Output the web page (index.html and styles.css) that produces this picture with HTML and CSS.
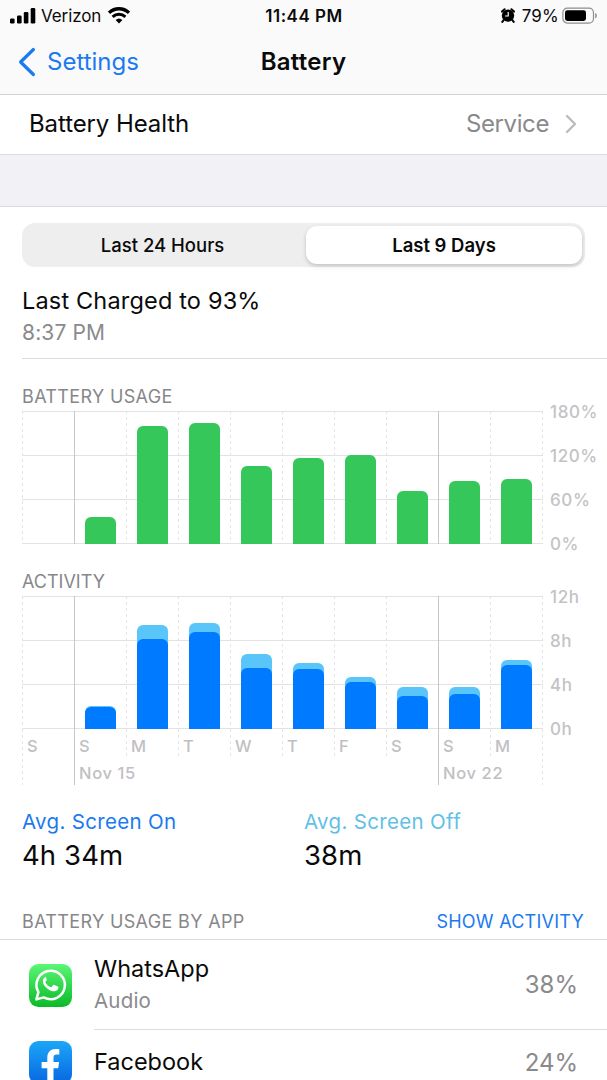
FILE: index.html
```html
<!DOCTYPE html>
<html lang="en">
<head>
    <meta charset="UTF-8">
    <meta name="viewport" content="width=device-width, initial-scale=1.0">
    <title>Battery</title>
    <link rel="stylesheet" href="styles.css">
</head>
<body>
    <header class="header">
        <div class="status-bar">
            <div class="status-left">
                <svg class="signal" width="26" height="16" viewBox="0 0 26 16">
                    <rect x="0" y="10.5" width="4.6" height="5" rx="1.3"/>
                    <rect x="7" y="7.5" width="4.6" height="8" rx="1.3"/>
                    <rect x="13.8" y="4" width="4.6" height="11.5" rx="1.3"/>
                    <rect x="20.7" y="0" width="4.6" height="15.5" rx="1.3"/>
                </svg>
                <span class="carrier">Verizon</span>
                <svg class="wifi" width="22" height="17" viewBox="0 0 22 17">
                    <path d="M1 5.700a14.600 14.600 0 0 1 20 0" fill="none" stroke="#000" stroke-width="3.300"/>
                    <path d="M4.600 9.800a9.400 9.400 0 0 1 12.800 0" fill="none" stroke="#000" stroke-width="3"/>
                    <path d="M11 16.400l-3.400-3.300a5 5 0 0 1 6.800 0z"/>
                </svg>
            </div>
            <div class="time">11:44 PM</div>
            <div class="status-right">
                <svg class="alarm" width="14" height="15" viewBox="0 0 14 15">
                    <circle cx="7" cy="7.600" r="6.200"/>
                    <path d="M1 3.600L3.600 1.200M13 3.600L10.400 1.200M2.600 12.200l-1.300 1.700M11.400 12.200l1.300 1.700" stroke="#000" stroke-width="2" stroke-linecap="round"/>
                    <path d="M7.200 4v4H4" fill="none" stroke="#fafafb" stroke-width="1.200"/>
                </svg>
                <span class="percent">79%</span>
                <svg class="battery" width="36" height="18" viewBox="0 0 36 18">
                    <rect x=".9" y="1.100" width="30.600" height="15" rx="4.500" fill="none" stroke="#8e8e90" stroke-width="1.200"/>
                    <rect x="3" y="3.200" width="21" height="10.800" rx="2.400"/>
                    <path d="M33.200 6v5.400c2.200-.6 2.200-4.800 0-5.400z" fill="#8e8e90"/>
                </svg>
            </div>
        </div>
        <div class="nav">
            <a class="back">
                <svg width="18" height="30" viewBox="0 0 18 30">
                    <path d="M15.400 2.500L2.600 15l12.800 12.500" fill="none" stroke="#1a7af0" stroke-width="3.200" stroke-linecap="round" stroke-linejoin="round"/>
                </svg>
                <span class="back-label">Settings</span>
            </a>
            <h1>Battery</h1>
        </div>
    </header>

    <div class="health">
        <span class="health-label">Battery Health</span>
        <span class="health-value">Service</span>
        <svg width="12" height="20" viewBox="0 0 12 20">
            <path d="M2 2l8 8-8 8" fill="none" stroke="#bcbcbf" stroke-width="2.400" stroke-linecap="round" stroke-linejoin="round"/>
        </svg>
    </div>
    <div class="gap"></div>

    <div class="segmented">
        <div class="segment">Last 24 Hours</div>
        <div class="segment active">Last 9 Days</div>
    </div>

    <div class="charged">
        <div class="charged-title">Last Charged to 93%</div>
        <div class="charged-time">8:37 PM</div>
    </div>

    <section class="usage">
        <h2>BATTERY USAGE</h2>
        <div class="chart">
            <div class="plot">
                <div class="col"></div>
                <div class="col week"><div class="bar" style="height: 27px"></div></div>
                <div class="col"><div class="bar" style="height: 118px"></div></div>
                <div class="col"><div class="bar" style="height: 121px"></div></div>
                <div class="col"><div class="bar" style="height: 78px"></div></div>
                <div class="col"><div class="bar" style="height: 86px"></div></div>
                <div class="col"><div class="bar" style="height: 89px"></div></div>
                <div class="col"><div class="bar" style="height: 53px"></div></div>
                <div class="col week"><div class="bar" style="height: 63px"></div></div>
                <div class="col"><div class="bar" style="height: 65px"></div></div>
                <div class="col end"></div>
            </div>
            <div class="axis">
                <span>180%</span>
                <span>120%</span>
                <span>60%</span>
                <span>0%</span>
            </div>
        </div>
    </section>

    <section class="activity">
        <h2>ACTIVITY</h2>
        <div class="chart">
            <div class="plot">
                <div class="col"></div>
                <div class="col week"><div class="bar off" style="height: 23px"><div class="on" style="height: 22px"></div></div></div>
                <div class="col"><div class="bar off" style="height: 104px"><div class="on" style="height: 90px"></div></div></div>
                <div class="col"><div class="bar off" style="height: 106px"><div class="on" style="height: 97px"></div></div></div>
                <div class="col"><div class="bar off" style="height: 75px"><div class="on" style="height: 61px"></div></div></div>
                <div class="col"><div class="bar off" style="height: 66px"><div class="on" style="height: 60px"></div></div></div>
                <div class="col"><div class="bar off" style="height: 52px"><div class="on" style="height: 47px"></div></div></div>
                <div class="col"><div class="bar off" style="height: 42px"><div class="on" style="height: 33px"></div></div></div>
                <div class="col week"><div class="bar off" style="height: 42px"><div class="on" style="height: 35px"></div></div></div>
                <div class="col"><div class="bar off" style="height: 69px"><div class="on" style="height: 64px"></div></div></div>
                <div class="col end"></div>
            </div>
            <div class="axis">
                <span>12h</span>
                <span>8h</span>
                <span>4h</span>
                <span>0h</span>
            </div>
        </div>
        <div class="days">
            <div class="day tall">S</div>
            <div class="day tall week">S<span class="date">Nov 15</span></div>
            <div class="day">M</div>
            <div class="day">T</div>
            <div class="day">W</div>
            <div class="day">T</div>
            <div class="day">F</div>
            <div class="day">S</div>
            <div class="day tall week">S<span class="date">Nov 22</span></div>
            <div class="day">M</div>
            <div class="day tall end"></div>
        </div>
    </section>

    <div class="averages">
        <div class="average">
            <div class="average-label">Avg. Screen On</div>
            <div class="average-value">4h 34m</div>
        </div>
        <div class="average">
            <div class="average-label light">Avg. Screen Off</div>
            <div class="average-value">38m</div>
        </div>
    </div>

    <div class="apps-header">
        <h2>BATTERY USAGE BY APP</h2>
        <a class="show">SHOW ACTIVITY</a>
    </div>

    <div class="app">
        <svg class="app-icon" width="43" height="43" viewBox="0 0 43 43">
            <defs>
                <linearGradient id="wa" x1="0" y1="0" x2="0" y2="1">
                    <stop offset="0" stop-color="#5bf675"/>
                    <stop offset="1" stop-color="#0bba28"/>
                </linearGradient>
            </defs>
            <rect width="43" height="43" rx="9.500" fill="url(#wa)"/>
            <path d="M7.400 35.400l2-7.300a14.200 14.200 0 1 1 5.400 5.300z" fill="none" stroke="#fff" stroke-width="2.500" stroke-linejoin="round"/>
            <path d="M16.400 13.200c-.8 0-2.600 1.300-2.500 4.300.1 3.200 2.600 5.500 4.600 7.200 2.200 1.900 5.200 2.900 7.200 2.600 2.400-.4 3.800-1.900 3.800-4 0-.6-.4-.8-4.100-2.400-.8-.3-1.200 0-2.600 2-.4.5-.7.500-1.400.2-2.200-1-3.800-2.400-5-4.700-.3-.6 1.600-1.900 1.400-2.900l-1.400-3.400z" fill="#fff"/>
        </svg>
        <div class="app-text">
            <div class="app-name">WhatsApp</div>
            <div class="app-detail">Audio</div>
        </div>
        <div class="app-percent">38%</div>
    </div>
    <div class="app last">
        <svg class="app-icon" width="43" height="43" viewBox="0 0 43 43">
            <defs>
                <linearGradient id="fb" x1="0" y1="0" x2="0" y2="1">
                    <stop offset="0" stop-color="#1ba7f8"/>
                    <stop offset="1" stop-color="#0866e0"/>
                </linearGradient>
            </defs>
            <rect width="43" height="43" rx="9.500" fill="url(#fb)"/>
            <path d="M18.300 43V27.300h-5.700v-6.200h5.700v-4.300c0-5.700 3.300-8.800 8.300-8.800 1.500 0 2.800.1 3.700.3v5.300h-2.700c-2.500 0-3.100 1.300-3.100 3.100v4.400h5.600l-.9 6.200h-4.700V43z" fill="#fff"/>
        </svg>
        <div class="app-text">
            <div class="app-name">Facebook</div>
        </div>
        <div class="app-percent">24%</div>
    </div>
</body>
</html>
```
FILE: styles.css
```css
* {
    box-sizing: border-box;
}

body {
    margin: 0;
    height: 1080px;
    overflow: hidden;
    background-color: #fff;
    color: #0a0a0a;
    font-family: Inter, "Liberation Sans", sans-serif;
    white-space: nowrap;
}

h1,
h2 {
    margin: 0;
    font-weight: 400;
}

h2 {
    font-size: 18px;
    line-height: 20px;
    letter-spacing: 0.35px;
    color: #87878a;
}

svg {
    display: block;
    flex-shrink: 0;
}

/* status bar + title */
.header {
    height: 95px;
    background-color: #fafafb;
    border-bottom: 1px solid #d4d4d6;
}

.status-bar,
.nav {
    display: grid;
    grid-template-columns: 1fr auto 1fr;
    align-items: center;
}

.status-bar {
    height: 31px;
    padding: 0 9px 0 10px;
    font-size: 17px;
}

.status-left,
.status-right {
    display: flex;
    align-items: center;
}

.status-right {
    justify-content: flex-end;
}

.carrier {
    margin: 0 7px 0 5px;
    letter-spacing: -0.1px;
}

.time {
    font-weight: 600;
    letter-spacing: 0.5px;
}

.percent {
    margin: 0 3px 0 7px;
    letter-spacing: 0.2px;
}

.nav {
    height: 61px;
    padding: 0 18px;
}

.back {
    display: flex;
    align-items: center;
    gap: 11px;
    color: #1a7af0;
    font-size: 24px;
}

h1 {
    font-size: 24px;
    font-weight: 600;
    letter-spacing: 0.25px;
}

.health {
    display: flex;
    align-items: center;
    height: 60px;
    padding: 0 30px 2px 29px;
    border-bottom: 1px solid #dcdcde;
    font-size: 24px;
    letter-spacing: -0.1px;
}

.health-value {
    margin: 0 16px 0 auto;
    letter-spacing: -0.4px;
    color: #8a8a8d;
}

.gap {
    height: 52px;
    background-color: #f1f1f6;
    border-bottom: 1px solid #dadadd;
}

.segmented {
    display: grid;
    grid-template-columns: 1fr 276px;
    width: 563px;
    height: 44px;
    margin: 16px 0 0 22px;
    padding: 3px;
    border-radius: 13px;
    background-color: #eeeeee;
    font-size: 18.5px;
}

.segment {
    display: flex;
    align-items: center;
    justify-content: center;
    padding-right: 6px;
    border-radius: 11px;
    font-weight: 500;
}

.segment.active {
    padding: 0;
    background-color: #fff;
    font-weight: 600;
    box-shadow: 0 2px 4px rgba(0, 0, 0, 0.18);
}

.charged {
    height: 92px;
    margin-left: 22px;
    padding-top: 18px;
    border-bottom: 1px solid #dcdcde;
}

.charged-title {
    font-size: 23.5px;
    line-height: 32px;
    letter-spacing: 0.17px;
}

.charged-time {
    font-size: 21px;
    line-height: 32px;
    letter-spacing: 0.15px;
    color: #8a8a8d;
}

/* charts */
.usage,
.activity {
    padding: 28px 0 0 22px;
}

.activity h2 {
    letter-spacing: 0;
}

.chart {
    display: flex;
    margin-top: 4px;
}

.plot {
    display: grid;
    grid-template-columns: repeat(10, 52px) 1px;
    height: 133px;
    background: repeating-linear-gradient(#e2e2e4 0 1px, transparent 1px 44px);
}

.col,
.day {
    background: repeating-linear-gradient(#e4e4e6 0 3px, transparent 3px 6px) left / 1px 100% no-repeat;
}

.col {
    display: flex;
    align-items: flex-end;
    padding-left: 10.5px;
}

.col.end,
.day.end {
    padding: 0;
}

.col.week,
.day.week {
    background: linear-gradient(#c6c6c8, #c6c6c8) left / 1px 100% no-repeat;
}

.bar {
    display: flex;
    align-items: flex-end;
    width: 31.5px;
    border-radius: 6px 6px 0 0;
    background-color: #35c759;
}

.bar.off {
    background-color: #5ac5f8;
}

.on {
    width: 100%;
    border-radius: 6px 6px 0 0;
    background-color: #007aff;
}

.axis {
    display: flex;
    flex-direction: column;
    gap: 24px;
    height: 152px;
    margin: -9.5px 0 -9.5px 7px;
    font-size: 17px;
    font-weight: 500;
    line-height: 20px;
    letter-spacing: 0.6px;
    color: #c3c3c5;
}

.days {
    display: grid;
    grid-template-columns: repeat(10, 52px) 1px;
    height: 56px;
    align-items: start;
}

.day {
    height: 29px;
    padding: 7px 0 0 5px;
    font-size: 16.5px;
    font-weight: 500;
    line-height: 20px;
    color: #c0c0c2;
}

.day.tall {
    height: 56px;
}

.date {
    display: block;
    margin-top: 7px;
    letter-spacing: 0.65px;
}

.averages {
    display: grid;
    grid-template-columns: 282px 1fr;
    margin: 23px 0 0 22px;
}

.average-label {
    font-size: 20.5px;
    line-height: 27px;
    letter-spacing: 0.33px;
    color: #1a7af0;
}

.average-label.light {
    color: #62bfe6;
}

.average-value {
    font-size: 27.5px;
    line-height: 40px;
    letter-spacing: 0.1px;
}

.apps-header {
    display: flex;
    justify-content: space-between;
    height: 65px;
    padding: 37px 23px 0 22px;
    border-bottom: 1px solid #dcdcde;
}

.show {
    font-size: 18px;
    line-height: 20px;
    letter-spacing: 0.25px;
    color: #1a7af0;
}

.app {
    display: flex;
    align-items: center;
    height: 90px;
    padding-left: 29px;
}

.app-text {
    display: flex;
    flex-direction: column;
    flex: 1;
    justify-content: center;
    height: 100%;
    margin-left: 22px;
    border-bottom: 1px solid #dcdcde;
}

.app-name {
    font-size: 23.5px;
    line-height: 32px;
}

.app-detail {
    font-size: 20.5px;
    line-height: 32px;
    letter-spacing: 0.2px;
    color: #8a8a8d;
}

.app-percent {
    display: flex;
    align-items: center;
    height: 100%;
    padding-right: 29px;
    border-bottom: 1px solid #dcdcde;
    font-size: 24px;
    color: #8a8a8d;
}

.app.last {
    height: 65px;
}
```
